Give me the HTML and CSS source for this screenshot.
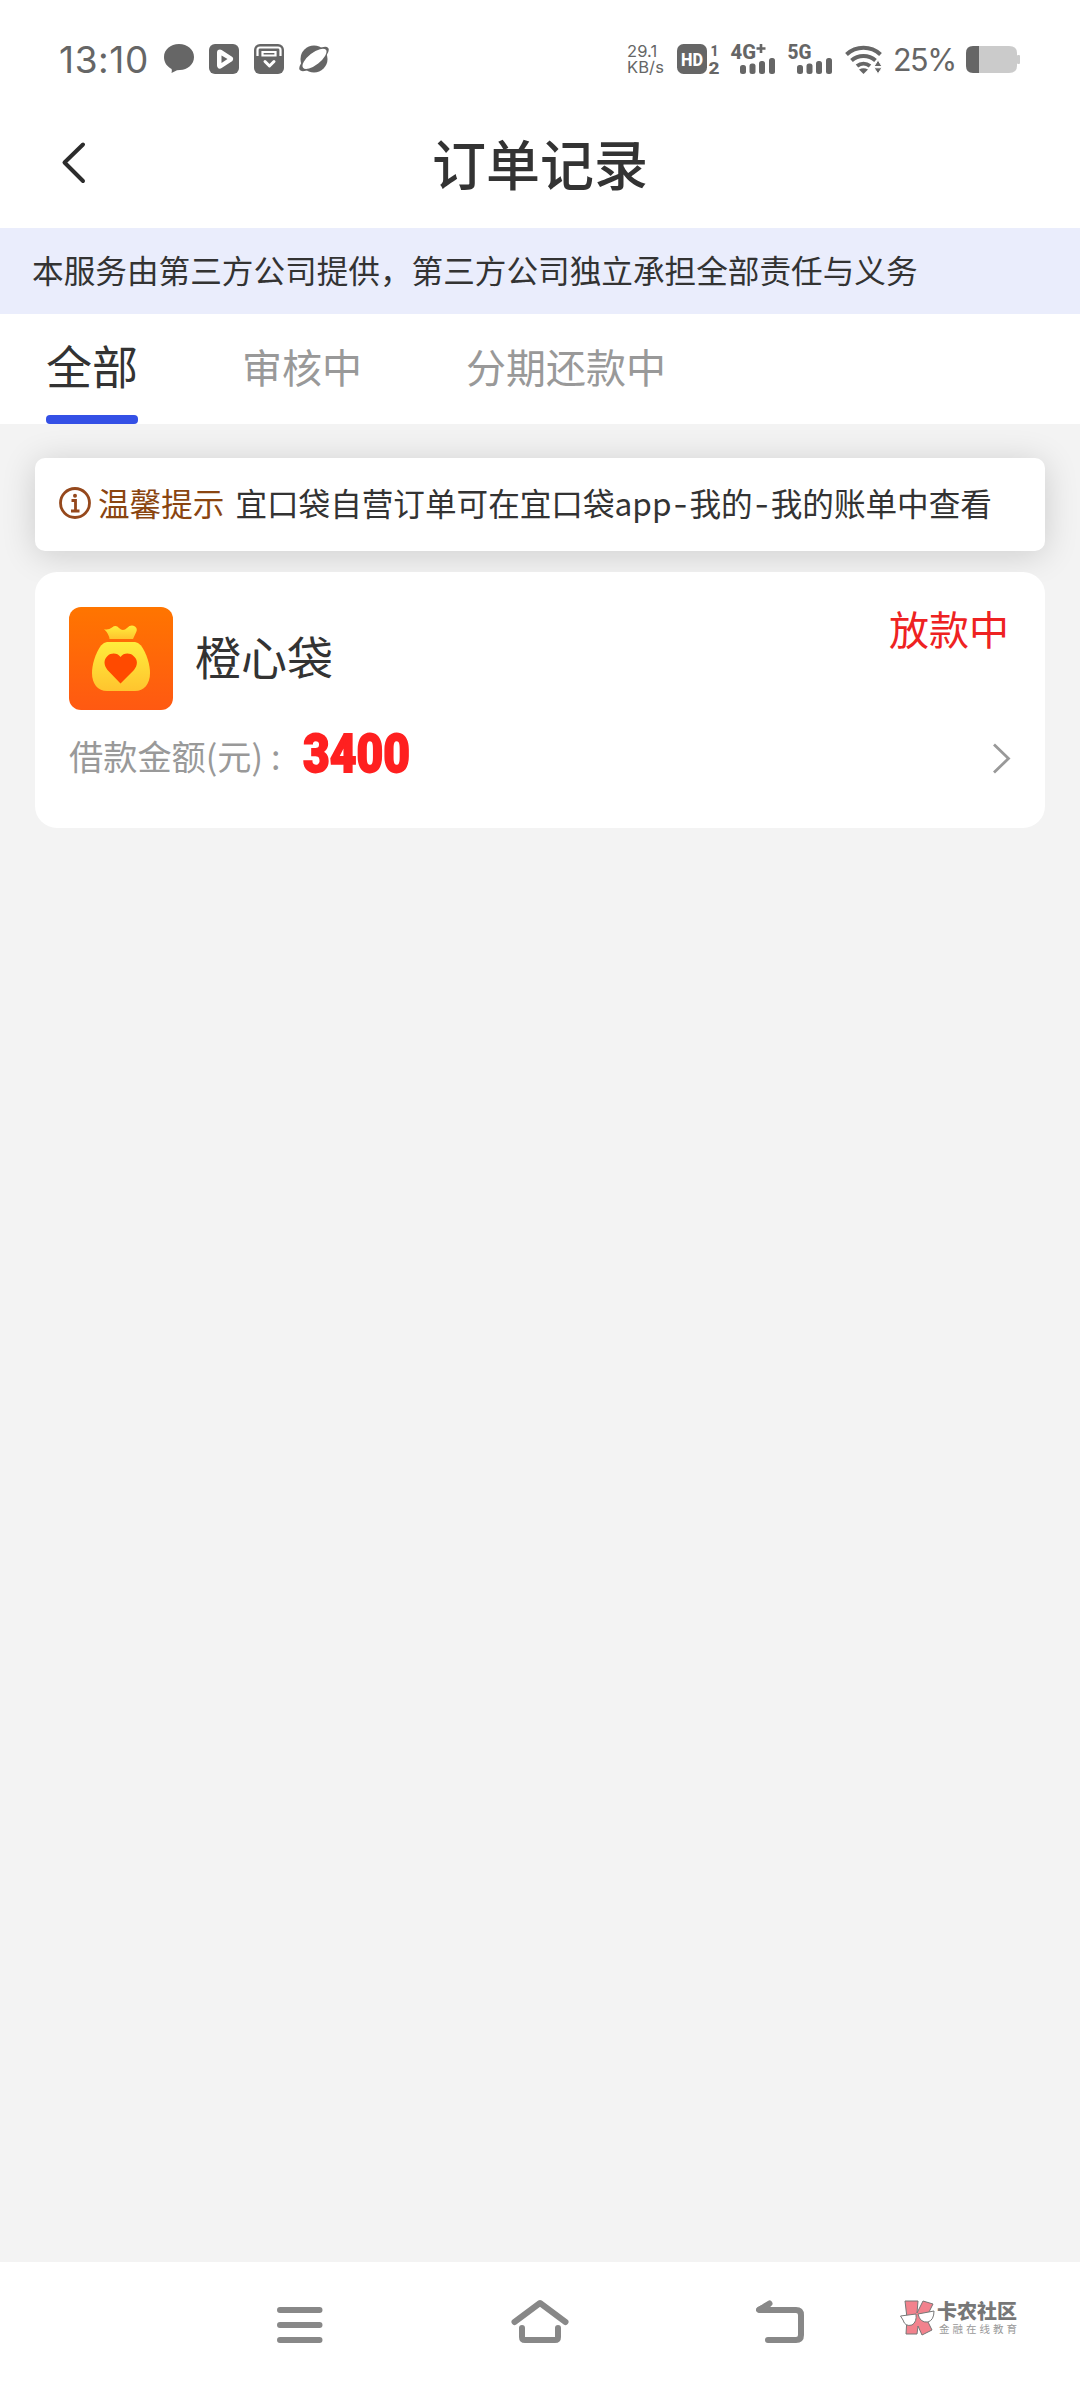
FILE: index.html
```html
<!DOCTYPE html>
<html lang="zh-CN">
<head>
<meta charset="utf-8">
<title>订单记录</title>
<link rel="stylesheet" href="styles.css">
</head>
<body>
<div class="screen">
  <div class="status">
    <span class="clock">13:10</span>
    <svg class="notices" width="166" height="32" viewBox="163 43 166 32" fill="#666">
      <path d="M179 44c8.500 0 15 5.600 15 13s-6.500 13-14 13q-2 0-3 .2L171.500 73q.7-2 .1-4C167 66.500 164 62.500 164 57c0-7.400 6.500-13 15-13z"/>
      <rect x="209" y="44" width="30" height="30" rx="6"/>
      <path d="M220 52.500l10 6.500-10 6.500z" fill="#fff" stroke="#fff" stroke-width="6" stroke-linejoin="round"/>
      <path d="M221.500 55.500l6 3.500-6 4z"/>
      <rect x="254" y="44" width="30" height="30" rx="6"/>
      <path d="M257.500 56v-6q0-2.500 2.500-2.500h18q2.500 0 2.500 2.500v6M262.500 55.500v-3.500h13v3.500z" fill="none" stroke="#fff" stroke-width="2.200"/>
      <path d="M265 61.500l4.500 4.500 4.500-4.500" fill="none" stroke="#fff" stroke-width="3" stroke-linecap="round" stroke-linejoin="round"/>
      <circle cx="314" cy="59" r="13.500"/>
      <ellipse cx="314" cy="59" rx="18" ry="6.500" transform="rotate(-38 314 59)"/>
      <ellipse cx="314.500" cy="58.800" rx="14.500" ry="6" transform="rotate(-38 314.500 58.800)" fill="#fff"/>
    </svg>
    <span class="speed"><span>29.1</span><span>KB/s</span></span>
    <svg class="signals" width="207" height="34" viewBox="676 42 207 34" fill="#666">
      <rect x="677" y="44" width="30" height="30" rx="6.500"/>
      <g class="glyph">
        <text x="681" y="65.500" font-size="18" textLength="22" lengthAdjust="spacingAndGlyphs" fill="#fff">HD</text>
        <text x="710.500" y="55.500" font-size="15.500" textLength="8" lengthAdjust="spacingAndGlyphs">1</text>
        <text x="708.500" y="73.500" font-size="16.500" textLength="11" lengthAdjust="spacingAndGlyphs">2</text>
        <text x="730.500" y="58.500" font-size="19.500" textLength="25.500" lengthAdjust="spacingAndGlyphs">4G</text>
        <text x="787.500" y="58.500" font-size="19.500" textLength="24" lengthAdjust="spacingAndGlyphs">5G</text>
      </g>
      <path d="M756.500 48.500h9M761 44v9" stroke="#666" stroke-width="2.600"/>
      <g id="bars">
        <rect x="740" y="65" width="6" height="9" rx="2.500"/>
        <rect x="749.500" y="63.500" width="6" height="10.500" rx="2.500"/>
        <rect x="759" y="61" width="6" height="13" rx="2.500"/>
        <rect x="769" y="58" width="6" height="16" rx="2.500"/>
      </g>
      <use href="#bars" x="57"/>
      <g fill="none" stroke="#666" stroke-width="4">
        <path d="M846.500 54.500a25 25 0 0 1 34 0"/>
        <path d="M851.500 60.500a18 18 0 0 1 24 0"/>
        <path d="M857 66a10.500 10.500 0 0 1 13 0"/>
      </g>
      <path d="M859 69.500q4.500-2.500 9 0L863.500 74z"/>
      <path d="M874 66.500h8l-4-6.500zM874 67.800h8l-4 6z" stroke="#fff" stroke-width="1"/>
    </svg>
    <span class="percent">25%</span>
    <svg width="54" height="27" viewBox="0 0 54 27">
      <path d="M13 0H43q8 0 8 7V20q0 7-8 7H13z" fill="#cbcbcb"/>
      <rect x="51" y="9" width="3" height="9" rx="1" fill="#cbcbcb"/>
      <path d="M13 0H7Q0 0 0 7V20q0 7 7 7h6z" fill="#666"/>
    </svg>
  </div>

  <header class="header">
    <svg class="back" width="26" height="44" viewBox="0 0 26 44" fill="none" stroke="#2c2c2c" stroke-width="4" stroke-linecap="round" stroke-linejoin="round"><path d="M23 3.500L4.500 21.500 23 40"/></svg>
    <h1>订单记录</h1>
  </header>
  <p class="banner">本服务由第三方公司提供，第三方公司独立承担全部责任与义务</p>

  <nav class="tabs">
    <span class="tab active">全部</span>
    <span class="tab">审核中</span>
    <span class="tab">分期还款中</span>
  </nav>

  <main class="content">
    <div class="tip">
      <svg width="32" height="32" viewBox="0 0 32 32" fill="none" stroke="#95481c" stroke-width="2.800"><circle cx="16" cy="16" r="14.500"/><path d="M12.500 13.500h4v10M12 24h8.500"/><circle cx="16" cy="8.800" r="2" fill="#95481c" stroke="none"/></svg>
      <span class="tip-label">温馨提示</span>
      <span>宜口袋自营订单可在宜口袋app<i class="dash">-</i>我的<i class="dash">-</i>我的账单中查看</span>
    </div>
    <section class="card">
      <div class="card-top">
        <svg width="104" height="103" viewBox="0 0 104 103">
          <defs>
            <linearGradient id="tile" x2="0" y2="1"><stop stop-color="#ff7500"/><stop offset="1" stop-color="#ff5912"/></linearGradient>
            <linearGradient id="sack" x2="0" y2="1"><stop stop-color="#ffed3c"/><stop offset="1" stop-color="#ffc42e"/></linearGradient>
          </defs>
          <rect width="104" height="103" rx="12" fill="url(#tile)"/>
          <path d="M35 22q4 1.500 8-1.500 4-3 7 .5 4 4 8 0t8-1.500q3 2 1 6l-3 6.500H40.500q-.5-5-5.500-10z" fill="url(#sack)"/>
          <path d="M38 35H66q3 0 6 3.500C78 47 81 58 81 66c0 11-6 18-15 18H38c-9 0-15-7-15-18C23 58 26 47 32 38.500Q35 35 38 35z" fill="url(#sack)"/>
          <path d="M51.500 76.500L38.500 63C34.500 58 34.500 52.500 38.500 49c4-3.600 10-3 13 1 3-4 9-4.600 13-1 4.500 3.500 4.500 9 .5 14z" fill="#ff4a00"/>
        </svg>
        <h2>橙心袋</h2>
        <span class="state">放款中</span>
      </div>
      <div class="card-row">
        <span class="label">借款金额(元)<i class="colon">:</i></span>
        <svg class="amount" width="160" height="80" viewBox="0 0 160 80"><text x="2" y="58.500" textLength="107" lengthAdjust="spacingAndGlyphs">3400</text></svg>
        <svg class="more" width="19" height="31" viewBox="0 0 19 31" fill="none" stroke="#999" stroke-width="2.800"><path d="M1 1.500L15.500 15.500 1 29.500"/></svg>
      </div>
    </section>
  </main>

  <footer class="navbar">
    <svg width="46" height="44" viewBox="277 2303 46 44" fill="none" stroke="#888" stroke-width="6" stroke-linecap="round"><path d="M280 2310h39.500M280 2325h39.500M280 2340h39.500"/></svg>
    <svg width="58" height="46" viewBox="511 2299 58 46" fill="none" stroke="#888" stroke-width="6" stroke-linecap="round" stroke-linejoin="round"><path d="M514.500 2322l25.500-19 25.500 19M522 2328v9q0 3 3 3h30q3 0 3-3v-9"/></svg>
    <svg width="48" height="46" viewBox="756 2299 48 46" fill="none" stroke="#888" stroke-width="6" stroke-linecap="round" stroke-linejoin="round"><path d="M769.500 2303.500L759 2310H796q5 0 5 5v20q0 5-5 5H768"/><path d="M759.500 2309.500l8 0 0-4z"/></svg>
    <div class="brand">
      <svg width="35" height="36" viewBox="0 0 35 36" stroke="#777" stroke-width="1" stroke-linejoin="round">
        <path d="M5 1H18L17 13 23 1 33 4 26 18 32 30 22 35 18 26 17 34H6L7 18z" fill="#f2828d"/>
        <path d="M.5 16L16 14q1 8-4 11-7 2-9-5zM18 14L34 11q0 9-6 11-8 1-10-8z" fill="#fff"/>
      </svg>
      <div class="brand-text"><b>卡农社区</b><small>金融在线教育</small></div>
    </div>
  </footer>
</div>
</body>
</html>
```
FILE: styles.css
```css
* { box-sizing: border-box; margin: 0; padding: 0; }
body {
  width: 1080px;
  background: #f3f3f3;
  color: #333;
  font-family: "Noto Sans CJK SC", sans-serif;
}
i { font-style: normal; }
svg { display: block; flex: none; }
.screen { display: flex; flex-direction: column; height: 2388px; overflow: hidden; }

.status {
  display: flex;
  align-items: center;
  height: 120px;
  padding: 0 60px 2px 59px;
  background: #fff;
  color: #666;
  font-family: Inter, sans-serif;
  white-space: nowrap;
}
.clock { width: 104px; font-size: 37px; letter-spacing: .6px; }
.speed {
  display: flex;
  flex-direction: column;
  width: 49px;
  margin-left: 298px;
  font-size: 16.500px;
  line-height: 16px;
  letter-spacing: .1px;
}
.glyph { font-family: "Roboto", sans-serif; font-weight: 800; }
.percent { width: 72px; margin-left: 10px; margin-right: 1px; font-size: 30.500px; letter-spacing: -1.500px; }

.header {
  display: flex;
  align-items: center;
  height: 108px;
  padding: 0 60px 22px;
  background: #fff;
}
.header h1 {
  flex: 1;
  margin-right: 26px;
  font-size: 54px;
  font-weight: 500;
  line-height: 80px;
  text-align: center;
}
.banner {
  height: 86px;
  padding-left: 32px;
  background: #eaedfc;
  font-size: 31.640px;
  line-height: 83px;
  white-space: nowrap;
}

.tabs {
  display: flex;
  gap: 104px;
  height: 110px;
  padding-left: 46px;
  background: #fff;
}
.tab { color: #999; font-size: 40px; line-height: 105px; }
.active {
  display: flex;
  flex-direction: column;
  width: 92px;
  color: #333;
  font-size: 46px;
  line-height: 101px;
  text-align: center;
}
.active::after { content: ""; height: 9px; border-radius: 4px; background: #3450e6; }

.content { display: flex; flex: 1; flex-direction: column; gap: 21px; padding: 34px 35px; }
.tip {
  display: flex;
  align-items: center;
  height: 93px;
  padding: 0 24px 4px;
  border-radius: 10px;
  background: #fff;
  box-shadow: 0 4px 34px rgba(0, 0, 0, .16);
  font-size: 31.600px;
  white-space: nowrap;
}
.tip span { margin-top: -2px; }
.tip .tip-label { margin: -2px 11px 0 7px; color: #8a4510; }
.dash { display: inline-block; width: 18px; font-family: Inter, sans-serif; text-align: center; }
.card {
  height: 256px;
  padding: 35px 33px 0 34px;
  border-radius: 22px;
  background: #fff;
}
.card-top { display: flex; height: 103px; align-items: center; }
.card-top h2 { margin: -7px 0 0 22px; font-size: 46px; font-weight: 400; line-height: 60px; }
.state { align-self: flex-start; margin: -8px 3px 0 auto; color: #ee2222; font-size: 40px; line-height: 58px; }
.card-row { display: flex; align-items: center; height: 86px; margin-top: 5px; }
.label { width: 232px; margin-top: -6px; color: #999; font-size: 34.200px; white-space: nowrap; }
.colon { margin-left: 8px; }
.amount { margin-top: -10px; font: 900 54px Roboto, sans-serif; fill: #ff2020; stroke: #ff2020; stroke-width: 1.800px; }
.more { margin-left: auto; }

.navbar { display: flex; align-items: center; height: 126px; padding-left: 277px; background: #fff; }
.navbar > svg:nth-child(1) { margin-right: 188px; }
.navbar > svg:nth-child(2) { margin: -6px 187px 0 0; }
.navbar > svg:nth-child(3) { margin: -6px 96px 0 0; }
.brand { display: flex; gap: 2px; margin-top: -14px; }
.brand-text { display: flex; flex-direction: column; white-space: nowrap; }
.brand b { color: #777; font-size: 20px; line-height: 22px; font-weight: 900; }
.brand small { padding-left: 2px; color: #999; font-size: 10.500px; line-height: 13px; letter-spacing: 3px; }
```
